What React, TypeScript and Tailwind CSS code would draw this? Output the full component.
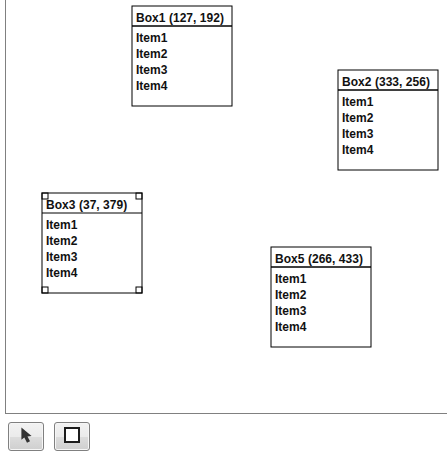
type Box = { title: string; x: number; y: number; selected?: boolean };

const boxes: Box[] = [
  { title: 'Box1 (127, 192)', x: 132, y: 6 },
  { title: 'Box2 (333, 256)', x: 338, y: 70 },
  { title: 'Box3 (37, 379)', x: 42, y: 193, selected: true },
  { title: 'Box5 (266, 433)', x: 271, y: 247 },
];

const items = ['Item1', 'Item2', 'Item3', 'Item4'];
const corners = [
  [0, 0],
  [94, 0],
  [0, 94],
  [94, 94],
];

function Node({ title, x, y, selected }: Box) {
  return (
    <div
      className="absolute size-[100px] pl-1 pt-1 text-[12px] font-bold leading-4 text-[#111]"
      style={{ left: x, top: y }}
    >
      <svg className="absolute left-0 top-0 overflow-visible" width="100" height="100" fill="none" stroke="#000">
        <rect width="100" height="100" />
        <path d="M0 20H100" />
        {!selected && <path d="M0 20H100" />}
        {selected && corners.map(([cx, cy]) => <rect key={`${cx}-${cy}`} x={cx} y={cy} width="6" height="6" />)}
      </svg>
      <div className="h-5 whitespace-nowrap tracking-[0.04px]">{title}</div>
      <ul>
        {items.map((item) => (
          <li key={item}>{item}</li>
        ))}
      </ul>
    </div>
  );
}

const button =
  'flex h-[29px] w-9 items-start justify-center rounded-[3px] border border-[#808080] bg-[linear-gradient(#f2f2f2,#ebebeb_50%,#dddddd_50%,#cfcfcf)] shadow-[inset_0_0_0_1px_#f6f6f6]';

export default function App() {
  return (
    <div className="h-[455px] w-[447px] overflow-hidden bg-white pl-[5px] font-['Liberation_Sans',Arial,sans-serif]">
      <div className="h-[414px] border-b border-l border-[#808080]">
        {boxes.map((box) => (
          <Node key={box.title} {...box} />
        ))}
      </div>
      <div className="flex gap-[10px] pl-[3px] pt-2">
        <button className={button} aria-label="Select">
          <svg className="mt-1" width="12" height="17" viewBox="0 0 12 17" fill="#333">
            <path d="M1.4 .6V12.8L4.3 10.5L7 15.8L10 14.3L7.5 9.4L11.6 9Z" />
          </svg>
        </button>
        <button className={button} aria-label="Add box">
          <span className="mt-1 size-4 border-2 border-[#1c1c1c] bg-white" />
        </button>
      </div>
    </div>
  );
}
